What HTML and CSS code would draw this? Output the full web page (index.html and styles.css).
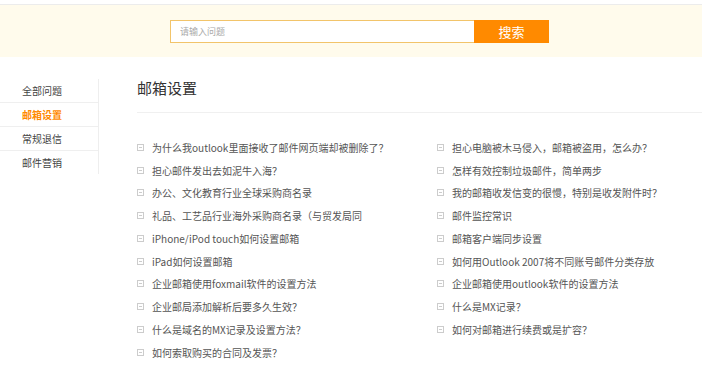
FILE: index.html
```html
<!DOCTYPE html>
<html lang="zh-CN">
<head>
    <meta charset="UTF-8">
    <title>帮助中心 - 邮箱设置</title>
    <link rel="stylesheet" href="styles.css">
</head>
<body>
    <div class="search-bar">
        <form class="search-form">
            <input type="text" class="search-input" placeholder="请输入问题">
            <button type="button" class="search-btn">搜索</button>
        </form>
    </div>

    <div class="main">
        <ul class="side-nav">
            <li><a href="#">全部问题</a></li>
            <li class="active"><a href="#">邮箱设置</a></li>
            <li><a href="#">常规退信</a></li>
            <li><a href="#">邮件营销</a></li>
        </ul>

        <div class="content">
            <h2 class="title">邮箱设置</h2>
            <ul class="faq-list">
                <li><a href="#">为什么我outlook里面接收了邮件网页端却被删除了？</a></li>
                <li><a href="#">担心电脑被木马侵入，邮箱被盗用，怎么办？</a></li>
                <li><a href="#">担心邮件发出去如泥牛入海？</a></li>
                <li><a href="#">怎样有效控制垃圾邮件，简单两步</a></li>
                <li><a href="#">办公、文化教育行业全球采购商名录</a></li>
                <li><a href="#">我的邮箱收发信变的很慢，特别是收发附件时？</a></li>
                <li><a href="#">礼品、工艺品行业海外采购商名录（与贸发局同</a></li>
                <li><a href="#">邮件监控常识</a></li>
                <li><a href="#">iPhone/iPod touch如何设置邮箱</a></li>
                <li><a href="#">邮箱客户端同步设置</a></li>
                <li><a href="#">iPad如何设置邮箱</a></li>
                <li><a href="#">如何用Outlook 2007将不同账号邮件分类存放</a></li>
                <li><a href="#">企业邮箱使用foxmail软件的设置方法</a></li>
                <li><a href="#">企业邮箱使用outlook软件的设置方法</a></li>
                <li><a href="#">企业邮局添加解析后要多久生效？</a></li>
                <li><a href="#">什么是MX记录？</a></li>
                <li><a href="#">什么是域名的MX记录及设置方法？</a></li>
                <li><a href="#">如何对邮箱进行续费或是扩容？</a></li>
                <li><a href="#">如何索取购买的合同及发票？</a></li>
            </ul>
        </div>
    </div>
</body>
</html>
```

FILE: styles.css
```css
body {
    margin: 0;
    font-family: "Noto Sans CJK SC", "Noto Sans", sans-serif;
    background: #fff;
    color: #555;
    overflow: hidden;
}
ul {
    list-style: none;
    margin: 0;
    padding: 0;
}
a {
    color: inherit;
    text-decoration: none;
}

/* search */
.search-bar {
    margin-top: 4px;
    border-top: 1px solid #ececec;
    background: #fffbec;
    height: 53px;
    box-sizing: border-box;
    padding: 15px 0 0 170px;
}
.search-form {
    display: flex;
}
.search-input {
    width: 304px;
    height: 23px;
    box-sizing: border-box;
    border: 1px solid #f2c46a;
    border-right: none;
    padding: 0 9px;
    font-family: inherit;
    font-size: 9px;
    outline: none;
}
.search-input::placeholder {
    color: #aaa;
}
.search-btn {
    width: 75px;
    height: 23px;
    border: none;
    background: #ff8a00;
    color: #fff;
    font-family: inherit;
    font-size: 13px;
    padding: 0;
    cursor: pointer;
}

/* layout */
.main {
    display: flex;
    align-items: flex-start;
}
.side-nav {
    flex-shrink: 0;
    width: 99px;
    box-sizing: border-box;
    margin-top: 22px;
    border-right: 1px solid #eee;
}
.side-nav li {
    height: 23px;
    line-height: 23px;
    padding-left: 22px;
    font-size: 10px;
    color: #444;
    border-bottom: 1px solid #efefef;
}
.side-nav li:last-child {
    border-bottom: none;
}
.side-nav li.active {
    color: #ff8a00;
    font-weight: bold;
}

.content {
    flex: 1;
    min-width: 0;
    margin-left: 38px;
}
.title {
    margin: 0;
    padding-top: 21px;
    height: 34px;
    line-height: 20px;
    font-size: 15px;
    font-weight: normal;
    color: #333;
    border-bottom: 1px solid #f0f0f0;
}

.faq-list {
    display: grid;
    grid-template-columns: 300px 300px;
    margin-top: 23px;
}
.faq-list li {
    display: flex;
    align-items: center;
    height: 22.75px;
    font-size: 10px;
    color: #555;
    white-space: nowrap;
}
.faq-list li::before {
    content: "";
    width: 5px;
    height: 5px;
    border: 1px solid #ccc;
    margin-right: 8px;
    background: linear-gradient(#ccc, #ccc) center / 3px 1px no-repeat;
    flex-shrink: 0;
}
```
